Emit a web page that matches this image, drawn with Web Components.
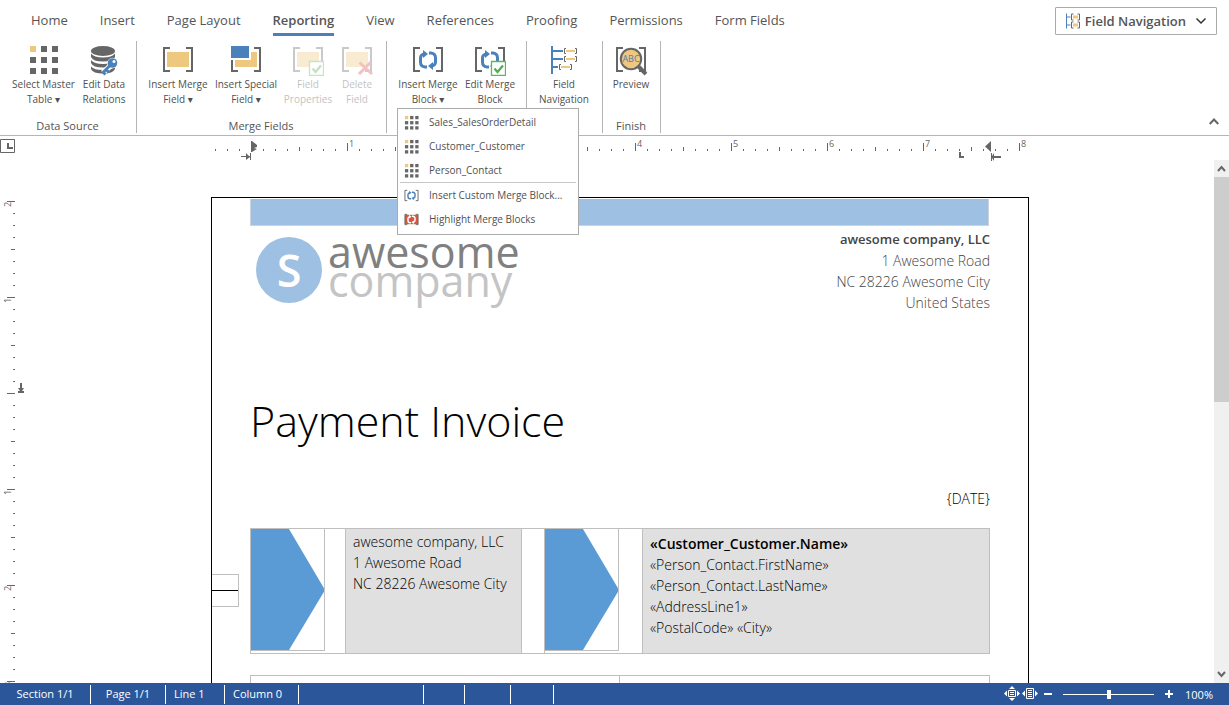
<!DOCTYPE html>
<html lang="en">
<head>
<meta charset="utf-8">
<title>Payment Invoice</title>
<style>
    html, body { height: 100%; margin: 0; }
    body {
        display: flex;
        flex-direction: column;
        overflow: hidden;
        background: #fff;
        color: #555;
        font-family: 'Open Sans', 'Noto Sans', sans-serif;
        font-size: 13px;
    }
</style>
</head>
<body>
<tab-bar>
    <tab-link>Home</tab-link>
    <tab-link>Insert</tab-link>
    <tab-link>Page Layout</tab-link>
    <tab-link active>Reporting</tab-link>
    <tab-link>View</tab-link>
    <tab-link>References</tab-link>
    <tab-link>Proofing</tab-link>
    <tab-link>Permissions</tab-link>
    <tab-link>Form Fields</tab-link>
    <context-button slot="end" icon="navsmall">Field Navigation</context-button>
</tab-bar>
<ribbon-bar>
    <ribbon-group label="Data Source">
        <ribbon-button icon="dots" style="--w:73px">Select Master<br>Table ▾</ribbon-button>
        <ribbon-button icon="database" style="--w:48px">Edit Data<br>Relations</ribbon-button>
    </ribbon-group>
    <ribbon-group label="Merge Fields">
        <ribbon-button icon="field" style="--w:68px">Insert Merge<br>Field ▾</ribbon-button>
        <ribbon-button icon="special" style="--w:68px">Insert Special<br>Field ▾</ribbon-button>
        <ribbon-button icon="props" disabled style="--w:56px">Field<br>Properties</ribbon-button>
        <ribbon-button icon="delete" disabled style="--w:42px">Delete<br>Field</ribbon-button>
    </ribbon-group>
    <ribbon-group>
        <ribbon-button icon="block" style="--w:68px">Insert Merge<br>Block ▾
            <drop-menu slot="menu">
                <menu-item icon="dots">Sales_SalesOrderDetail</menu-item>
                <menu-item icon="dots">Customer_Customer</menu-item>
                <menu-item icon="dots">Person_Contact</menu-item>
                <menu-item icon="blocksmall" divider>Insert Custom Merge Block...</menu-item>
                <menu-item icon="blockred">Highlight Merge Blocks</menu-item>
            </drop-menu>
        </ribbon-button>
        <ribbon-button icon="editblock" style="--w:56px">Edit Merge<br>Block</ribbon-button>
    </ribbon-group>
    <ribbon-group>
        <ribbon-button icon="nav" style="--w:60px">Field<br>Navigation</ribbon-button>
    </ribbon-group>
    <ribbon-group label="Finish">
        <ribbon-button icon="preview" style="--w:42px">Preview</ribbon-button>
    </ribbon-group>
</ribbon-bar>
<edit-area>
    <h-ruler slot="top"></h-ruler>
    <v-ruler slot="left"></v-ruler>
    <doc-page>
        <company-logo slot="logo"></company-logo>
        <address-lines slot="sender" right>
            <b>awesome company, LLC</b>
            <span>1 Awesome Road</span>
            <span>NC 28226 Awesome City</span>
            <span>United States</span>
        </address-lines>
        <span slot="title">Payment Invoice</span>
        <span slot="date">{DATE}</span>
        <address-lines slot="from">
            <span>awesome company, LLC</span>
            <span>1 Awesome Road</span>
            <span>NC 28226 Awesome City</span>
        </address-lines>
        <address-lines slot="to">
            <b>«Customer_Customer.Name»</b>
            <span>«Person_Contact.FirstName»</span>
            <span>«Person_Contact.LastName»</span>
            <span>«AddressLine1»</span>
            <span>«PostalCode» «City»</span>
        </address-lines>
    </doc-page>
    <scroll-bar slot="right"></scroll-bar>
</edit-area>
<status-bar>
    <status-cell center style="--w:90px">Section 1/1</status-cell>
    <status-cell center style="--w:74px">Page 1/1</status-cell>
    <status-cell style="--w:58px">Line 1</status-cell>
    <status-cell style="--w:73px">Column 0</status-cell>
    <status-cell style="--w:124px"></status-cell>
    <status-cell style="--w:40px"></status-cell>
    <status-cell style="--w:45px"></status-cell>
    <status-cell style="--w:42px"></status-cell>
    <zoom-control slot="end"></zoom-control>
</status-bar>

<script>
const G = '#666';
const Y = '#edc87e';
const B = '#4a81ba';

const bracket = (x1, x2, y1, y2, s = 2, n = 6) =>
    `<path d="M${x1 + n} ${y1}H${x1}V${y2}h${n}M${x2 - n} ${y1}H${x2}V${y2}h-${n}" fill="none" stroke="${G}" stroke-width="${s}"/>`;

// two arrows chasing each other, drawn around 0,0
const cycle = c => `<g fill="none" stroke="${c}" stroke-width="3">
    <path d="M-1 7H-3Q-7.500 6.500-7.500 2V-2Q-7.500-5.500-3-6"/><path d="M1-7H3Q7.500-6.500 7.500-2V2Q7.500 5.500 3 6"/></g>
    <path fill="${c}" d="M-5-10L0-6L-5-2ZM5 10L0 6L5 2Z"/>`;
const cycleAt = (x, y, c, k = 1) => `<g transform="translate(${x} ${y}) scale(${k})">${cycle(c)}</g>`;

const check = '<path d="M17.500 17.500h14v14h-14z" fill="#fff" stroke="#5cb85c" stroke-width="1.300"/><path d="M20.500 24.500l3 3.500 5.500-6.500" fill="none" stroke="#4cae4c" stroke-width="2.200"/>';

const dots = [2, 13, 24]
    .map(y => [2, 13, 24].map(x => `<rect x="${x}" y="${y}" width="6" height="6" fill="${x + y == 4 ? Y : G}"/>`).join(''))
    .join('');
const dotsSmall = [2, 13, 24]
    .map(y => [2, 13, 24].map(x => `<rect x="${x}" y="${y}" width="7" height="7" fill="${x + y == 4 ? Y : G}"/>`).join(''))
    .join('');

const icons = {
    dots,
    dotsSmall,
    database: `<g fill="${G}"><ellipse cx="15" cy="7" rx="12" ry="5"/>
        <path d="M3 9.500Q6 13.500 15 13.500T27 9.500V13Q25 17.500 15 17.500T3 13Z"/>
        <path d="M3 16Q6 20 15 20T27 16V19Q25 23.500 15 23.500T3 19Z"/>
        <path d="M3 22.500Q6 26 15 26T27 22.500V25Q25 29.500 15 29.500T3 25Z"/></g>
        <g stroke="#fff" stroke-width="5.500" fill="none"><circle cx="24.500" cy="19" r="2.500"/><path d="M22 22l-7 7"/></g>
        <circle cx="24.500" cy="19" r="4.800" fill="${B}"/><circle cx="26" cy="17.500" r="1.500" fill="#fff"/>
        <path d="M22.500 21l-8 8M18 25.500l3 3M15 28l2.500 2.500" stroke="${B}" stroke-width="3" fill="none"/>`,
    field: bracket(2, 30, 4, 27) + `<path fill="${Y}" d="M5 8h22v15H5z"/>`,
    special: bracket(2, 30, 4, 27) + `<path fill="${Y}" d="M5 8h22v15H5z"/><path fill="#fff" d="M0 0h21v16H0z"/><path fill="${B}" d="M1 2h18v12H1z"/>`,
    props: bracket(2, 30, 4, 27) + `<path fill="${Y}" d="M5 8h22v15H5z"/>` + check,
    delete: bracket(2, 30, 4, 27) + `<path fill="${Y}" d="M5 8h22v15H5z"/><path d="M18.500 18.500L31 30M30 18L18 30" stroke="#d9534f" stroke-width="3"/>`,
    block: bracket(2, 30, 4, 27) + cycleAt(16, 16, B),
    editblock: bracket(2, 30, 4, 27) + cycleAt(16, 16, B) + check,
    nav: `<path fill="${B}" d="M3 2h2v28H3zM5 6h10v2H5zM5 14h10v2H5zM5 22h5v2H5z"/>
        ${[[16, 4], [16, 12], [11, 20]].map(([x, y]) => `<path d="M${x + 2} ${y + .5}h-1.500v5h1.500M${x + 11} ${y + .5}h1.500v5h-1.500" fill="none" stroke="${G}"/><path fill="${Y}" d="M${x + 2} ${y + 2}h9v2h-9z"/>`).join('')}`,
    preview: bracket(2, 30, 4, 27) + `<circle cx="16" cy="15" r="12" fill="#fff"/><path d="M23 22l8 8" stroke="${G}" stroke-width="4"/>
        <circle cx="16" cy="15" r="10.200" fill="${Y}" stroke="${G}" stroke-width="2"/>
        <text x="16" y="18" text-anchor="middle" font-size="9" fill="${B}">ABC</text>`,
    navsmall: `<path fill="${B}" d="M2 1h2v30H2zM4 7h7v2H4zM4 23h7v2H4z"/>
        ${bracket(13, 29, 2, 14, 2, 4)}${bracket(13, 29, 18, 30, 2, 4)}<path fill="${Y}" d="M16 5h10v6H16zM16 21h10v6H16z"/>`,
    blocksmall: bracket(2, 30, 5, 27, 2, 5) + cycleAt(16, 16, B),
    blockred: `<path fill="#d9573d" d="M2 6h28v20H2z"/>` + bracket(2, 30, 5, 27, 2, 5) + cycleAt(16, 16, '#fff'),
};
const icon = (n, size) => `<svg width="${size}" height="${size}" viewBox="0 0 32 32" aria-hidden="true">${icons[n] || ''}</svg>`;

function define(name, render) {
    customElements.define(
        name,
        class extends HTMLElement {
            constructor() {
                super();
                this.attachShadow({ mode: 'open' });
            }
            connectedCallback() {
                this.shadowRoot.innerHTML = render(this);
                if (name == 'ribbon-button') {
                    const m = this.querySelector('drop-menu');
                    if (m) this.shadowRoot.querySelector('button').onclick = () => (m.hidden = !m.hidden);
                }
            }
        },
    );
}

define('tab-bar', () => `
<style>
    :host { display: flex; flex: none; height: 41px; padding: 0 12px 0 31px; align-items: flex-start; justify-content: space-between; }
    nav { display: flex; gap: 32px; }
</style>
<nav><slot></slot></nav><slot name="end"></slot>`);

define('tab-link', () => `
<style>
    :host { display: block; }
    a { display: block; padding: 10px 0 3px; line-height: 20px; color: #555; text-decoration: none; border-bottom: 3px solid transparent; }
    :host([active]) a { font-weight: 600; border-color: ${B}; }
</style>
<a href="#"><slot></slot></a>`);

define('context-button', el => `
<style>
    :host { display: block; padding-top: 7px; }
    button { display: flex; align-items: center; gap: 4px; height: 28px; padding: 0 9px; border: 1px solid #ababab; border-radius: 1px; background: #fff; color: #555; font: 600 13px 'Open Sans', sans-serif; }
    .c { margin-left: 5px; }
</style>
<button>${icon(el.getAttribute('icon'), 16)}<span><slot></slot></span>
<svg class="c" width="12" height="8" viewBox="0 0 12 8"><path d="M1.500 1.500L6 6l4.500-4.500" fill="none" stroke="#333" stroke-width="1.500"/></svg></button>`);

define('ribbon-bar', () => `
<style>
    :host { display: flex; flex: none; height: 94px; border-bottom: 1px solid #b5b5b5; }
    button { margin: auto 10px 10px auto; padding: 0; border: 0; background: none; line-height: 0; }
</style>
<slot></slot>
<button aria-label="Collapse ribbon"><svg width="10" height="7" viewBox="0 0 10 7"><path d="M.700 6L5 1.500 9.300 6" fill="none" stroke="${G}" stroke-width="2"/></svg></button>`);

define('ribbon-group', el => `
<style>
    :host { display: flex; flex-direction: column; height: 92px; box-sizing: border-box; padding: 0 8px 0 7px; border-right: 1px solid #b5b5b5; font-size: 11px; }
    .b { display: flex; flex: 1; }
    .l { height: 14px; line-height: 14px; text-align: center; }
</style>
<div class="b"><slot></slot></div><div class="l">${el.getAttribute('label') || ''}</div>`);

define('ribbon-button', el => `
<style>
    :host { display: block; position: relative; }
    button { display: flex; flex-direction: column; align-items: center; gap: 1px; width: var(--w); padding: 3px 0 0; border: 0; background: none; color: #505050; font: 10px/15px 'Open Sans', 'DejaVu Sans', sans-serif; white-space: nowrap; }
    svg { display: block; flex: none; }
    button:disabled { opacity: .35; }
</style>
<button${el.hasAttribute('disabled') ? ' disabled' : ''}>${icon(el.getAttribute('icon'), 32)}<span><slot></slot></span></button>
<slot name="menu"></slot>`);

define('drop-menu', () => `
<style>
    :host { display: block; position: absolute; z-index: 5; top: 67px; left: 3px; padding: 1px 2px 3px; border: 1px solid #ababab; background: #fff; }
    :host([hidden]) { display: none; }
</style>
<slot></slot>`);

define('menu-item', el => {
    const n = el.getAttribute('icon');
    return `
<style>
    :host { display: block; }
    :host([divider]) { border-top: 1px solid #c8c8c8; }
    button { display: flex; align-items: center; gap: 10px; width: 176px; height: 24px; padding: 0 4px; border: 0; background: none; color: #505050; font: 10px 'Open Sans', sans-serif; white-space: nowrap; }
    button:hover { background: #e5eef7; }
</style>
<button>${icon(n == 'dots' ? 'dotsSmall' : n, 15)}<span><slot></slot></span></button>`;
});

define('edit-area', () => `
<style>
    :host { display: grid; flex: 1; min-height: 0; grid-template: 24px minmax(0, 1fr) / 27px minmax(0, 1fr) 16px; }
    .corner { padding-top: 3px; }
    .corner svg { display: block; }
    .mid { display: flex; justify-content: center; align-items: flex-start; overflow: hidden; }
    .top { overflow: visible; }
</style>
<div class="corner"><svg width="15" height="14"><path d="M.500.500h14v13H.500z" fill="none" stroke="${G}"/><path d="M7 4h2v4h4v2H7z" fill="${G}"/></svg></div>
<div class="mid top"><slot name="top"></slot></div><div></div>
<slot name="left"></slot>
<div class="mid"><slot></slot></div>
<slot name="right"></slot>`);

// 96px to the inch, a tick at each eighth
define('h-ruler', () => {
    let s = '';
    for (let i = -3; i <= 64; i++) {
        const x = 40 + i * 12;
        const h = i % 8 ? (i % 4 ? 2 : 4) : 8;
        if (i) s += `<rect x="${x}" y="${15 - h}" width="1" height="${h}"/>`;
        if (i > 0 && i % 8 == 0) s += `<text x="${x + 2}" y="11">${i / 8}</text>`;
    }
    return `
<style>:host { display: block; width: 818px; } svg { display: block; overflow: visible; fill: ${G}; font-size: 9px; }</style>
<svg width="818" height="24">${s}
    <path d="M40 5h1l5 4v2l-3 1 3 1-5 3h-1zM30 20h5v-3l3 3h1v-3h1v7h-1v-3l-4 3v-3h-5zM748 16h2v4h3v2h-5zM774 10.500l6-5.500v11zM780 17h1v3l2-3v3h7v2h-7v3l-2-3v3h-1z"/>
</svg>`;
});

define('v-ruler', () => {
    let s = '';
    for (let i = -16; i <= 26; i++) {
        const y = 233 + i * 12;
        const w = i % 8 ? (i % 4 ? 2 : 4) : 8;
        s += `<rect x="${15 - w}" y="${y}" width="${w}" height="1"/>`;
        if (i && i % 8 == 0) s += `<text transform="translate(11 ${y + 6}) rotate(-90)">${Math.abs(i / 8)}</text>`;
    }
    return `
<style>:host { display: block; overflow: hidden; } svg { display: block; fill: ${G}; font-size: 9px; }</style>
<svg width="27" height="560">${s}<path d="M20 223h2v5h2l-2 3h2v2h-6v-2h2l-2-3h2z"/></svg>`;
});

define('doc-page', () => {
    const arrow = '<svg width="75" height="122"><path d="M0 0h38l36 61-36 60H0z" fill="#5b9bd5"/></svg>';
    return `
<style>
    :host { display: block; position: relative; box-sizing: border-box; width: 818px; height: 900px; margin-top: 37px; padding: 1px 38px; border: 1px solid #000; color: #000; font-size: 14px; font-weight: 300; line-height: 21px; }
    .band { height: 26px; margin-right: 1px; background: #9dc0e3; border: 1px solid #ccd3da; border-top: 0; }
    .head { display: flex; justify-content: space-between; height: 88px; }
    h1 { margin: 77px 0 37px; font-size: 43px; font-weight: 300; line-height: 60px; }
    .date { text-align: right; }
    .row { display: grid; grid-template-columns: 95px 176px 23px 98px 1fr; height: 126px; margin: 19px 0 21px; box-sizing: border-box; border: solid #bfbfbf; border-width: 1px 0 1px 1px; }
    .row > div { border-right: 1px solid #bfbfbf; }
    .pic svg { display: block; box-sizing: border-box; width: 74px; border: solid #bfbfbf; border-width: 0 1px 1px 0; }
    .grey { padding: 2px 7px; background: #e0e0e0; }
    .grey.to { padding-top: 4px; }
    .next { display: grid; grid-template-columns: 1fr 1fr; height: 60px; border: 1px solid #bfbfbf; }
    .next > :first-child { border-right: 1px solid #bfbfbf; }
    .mark { position: absolute; left: 0; top: 376px; width: 26px; height: 31px; border: 1px solid #bfbfbf; border-left: 0; }
    .mark::after { content: ''; display: block; margin-top: 15px; border-top: 1px solid #000; }
</style>
<div class="band"></div>
<div class="head"><slot name="logo"></slot><slot name="sender"></slot></div>
<h1><slot name="title"></slot></h1>
<div class="date"><slot name="date"></slot></div>
<div class="row">
    <div class="pic">${arrow}</div>
    <div class="grey"><slot name="from"></slot></div>
    <div></div>
    <div class="pic">${arrow}</div>
    <div class="grey to"><slot name="to"></slot></div>
</div>
<div class="next"><div></div><div></div></div>
<div class="mark"></div>`;
});

define('company-logo', () => `
<style>
    :host { display: flex; gap: 6px; padding: 11px 0 0 6px; }
    .s { display: flex; align-items: center; justify-content: center; width: 66px; height: 66px; border-radius: 50%; background: #9dc0e3; color: #fff; font-size: 45px; font-weight: 600; line-height: 66px; }
    .t { font-size: 43px; font-weight: 400; line-height: 29px; color: #808080; }
    .t div + div { color: #c4c4c4; }
</style>
<div class="s">S</div>
<div class="t"><div>awesome</div><div>company</div></div>`);

define('address-lines', () => `
<style>
    :host { display: flex; flex-direction: column; white-space: nowrap; }
    :host([right]) { padding-top: 3px; text-align: right; color: #444; }
    ::slotted(b) { font-weight: 600; }
    :host([right]) ::slotted(b) { font-size: 13px; }
</style>
<slot></slot>`);

define('scroll-bar', () => `
<style>
    :host { display: flex; flex-direction: column; margin-left: 1px; background: #f0f0f0; }
    button { display: flex; align-items: center; justify-content: center; height: 17px; padding: 0; border: 0; background: none; }
    .track { flex: 1; }
    .thumb { height: 46%; background: #cdcdcd; }
</style>
<button aria-label="Scroll up"><svg width="9" height="7"><path d="M1 6l3.500-4L8 6" fill="none" stroke="${G}" stroke-width="2"/></svg></button>
<div class="track"><div class="thumb"></div></div>
<button aria-label="Scroll down"><svg width="9" height="7"><path d="M1 1l3.500 4L8 1" fill="none" stroke="${G}" stroke-width="2"/></svg></button>`);

define('status-bar', () => `
<style>
    :host { display: flex; flex: none; justify-content: space-between; height: 22px; background: #2b579a; color: #fff; font-size: 11px; }
    .cells { display: flex; padding: 2px 0 1px; }
</style>
<div class="cells"><slot></slot></div><slot name="end"></slot>`);

define('status-cell', () => `
<style>
    :host { display: block; width: calc(var(--w) - 8px); padding-left: 8px; border-right: 1px solid #fff; line-height: 18px; }
    :host([center]) { width: var(--w); padding-left: 0; text-align: center; }
</style>
<slot></slot>`);

define('zoom-control', () => `
<style>
    :host { display: flex; align-items: center; padding-right: 16px; }
    button { padding: 0; border: 0; background: none; line-height: 0; }
    input { appearance: none; width: 91px; height: 11px; margin: 0 10px 0 7px; background: linear-gradient(#fff, #fff) center / 100% 1px no-repeat; }
    input::-webkit-slider-thumb { appearance: none; width: 4px; height: 9px; background: #fff; }
    .p { margin-left: 11px; }
</style>
<button aria-label="Fit page"><svg width="16" height="16" fill="#fff"><path d="M8 0l3 3H5zM8 15l3-3H5zM0 7.500l3-3v6zM16 7.500l-3-3v6z"/><path d="M4.500 4.500h7v6h-7z" fill="none" stroke="#fff"/><path d="M6 6h4v1H6zM6 8h4v1H6z"/></svg></button>
<button aria-label="Fit width"><svg width="20" height="16" fill="#fff"><path d="M2 7.500l3-3v6zM18 7.500l-3-3v6z"/><path d="M6.500 2.500h7v10h-7z" fill="none" stroke="#fff"/><path d="M8 4h4v1H8zM8 6h4v1H8zM8 8h4v1H8zM8 10h4v1H8z"/></svg></button>
<button aria-label="Zoom out"><svg width="16" height="10"><path d="M4 4h8v2H4z" fill="#fff"/></svg></button>
<input type="range" aria-label="Zoom" min="0" max="200" value="100">
<button aria-label="Zoom in"><svg width="10" height="10"><path d="M1 4h3V1h2v3h3v2H6v3H4V6H1z" fill="#fff"/></svg></button>
<span class="p">100%</span>`);
</script>
</body>
</html>
